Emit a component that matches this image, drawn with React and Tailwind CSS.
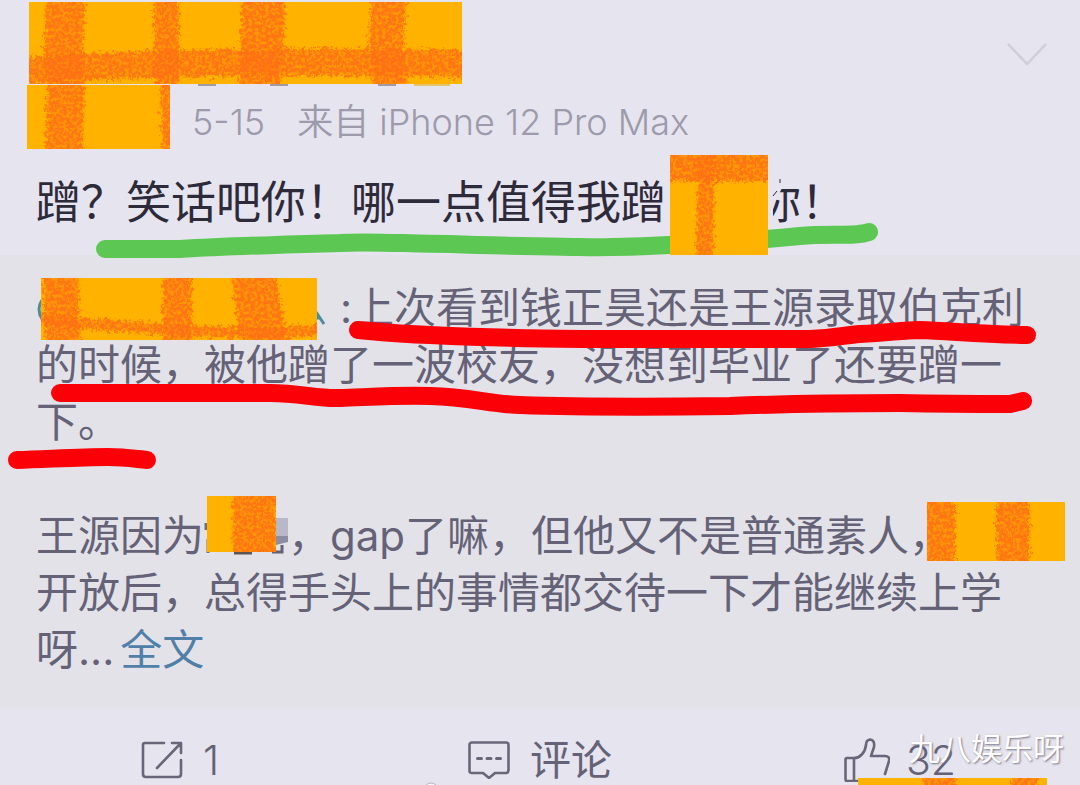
import React from "react";

const FONT = "font-[Inter,'Noto_Sans_CJK_SC',sans-serif]";

function Patch({ x, y, w, h, strokes }) {
  return (
    <svg x={x} y={y} width={w} height={h} viewBox={`0 0 ${w} ${h}`}>
      <rect width={w} height={h} fill="#ffb300" />
      {strokes.map(([d, width], i) => (
        <g key={i} fill="none" stroke="#ff7012">
          <path d={d} strokeWidth={width - 4} opacity="0.4" filter="url(#edge)" />
          <path d={d} strokeWidth={width} filter="url(#grain)" opacity="0.85" />
        </g>
      ))}
    </svg>
  );
}

function Markup() {
  return (
    <svg
      className="pointer-events-none absolute left-0 top-0"
      width="1080"
      height="785"
      viewBox="0 0 1080 785"
      aria-hidden="true"
    >
      <defs>
        <filter id="edge" filterUnits="userSpaceOnUse" x="-20" y="-20" width="480" height="140">
          <feTurbulence type="fractalNoise" baseFrequency="0.4" numOctaves="2" seed="3" result="n" />
          <feDisplacementMap in="SourceGraphic" in2="n" scale="8" xChannelSelector="R" yChannelSelector="G" />
        </filter>
        <filter id="grain" filterUnits="userSpaceOnUse" x="-20" y="-20" width="480" height="140">
          <feTurbulence type="fractalNoise" baseFrequency="0.3" numOctaves="3" seed="7" result="n" />
          <feDisplacementMap in="SourceGraphic" in2="n" scale="12" xChannelSelector="R" yChannelSelector="G" result="s" />
          <feColorMatrix in="n" type="matrix" values="0 0 0 0 1  0 0 0 0 1  0 0 0 0 1  0 0 0 5 -1.8" result="m" />
          <feComposite in="s" in2="m" operator="in" />
        </filter>
      </defs>

      <path d="M766 175H782V188L773 206V222H766Z" fill="#e6e4ee" />
      <path d="M773 196l4 -5M780 179v4" stroke="#2d2a3a" strokeWidth="1" />

      <g fill="none" strokeWidth="18" strokeLinecap="round" strokeLinejoin="round">
        <path
          stroke="#5cc853"
          d="M105 249H180C230 246 270 245 340 243C370 241 410 244 450 244C500 246 540 246 580 247C620 248 650 246 690 244C730 242 760 240 800 236C830 233 855 237 869 232"
        />
        <path
          stroke="#fb0007"
          d="M358 330C380 332 400 334 430 335C520 339 570 339 640 339H810C835 338 845 335 860 334C890 333 900 330 920 330C950 331 980 334 1027 335"
        />
        <path
          stroke="#fb0007"
          d="M60 393H270C300 393 318 399 340 398C370 397 400 395 430 396C470 397 490 404 520 405C580 407 650 407 730 406C780 404 850 403 900 403C950 404 990 404 1010 404L1023 401"
        />
        <path stroke="#fb0007" d="M17 460C50 459 80 457 108 457C125 457 136 459 147 460" />
      </g>

      <path d="M198 85h18M270 85h18M378 85h18" stroke="#a09aa4" strokeWidth="2" />
      <path d="M414 85h36" stroke="#e5c46e" strokeWidth="2" />
      <Patch
        x={29} y={2} w={433} h={82}
        strokes={[
          ["M37 -6Q33 40 36 90", 40],
          ["M137 -6L138 90", 26],
          ["M235 -6L231 90", 44],
          ["M360 -6L357 40L362 90", 36],
          ["M-6 69Q60 64 130 62T300 60T440 63", 28],
        ]}
      />
      <Patch x={27} y={85} w={143} h={64} strokes={[["M39 -6L37 70", 38], ["M141 -6L143 70", 16]]} />
      <Patch x={670} y={155} w={98} h={100} strokes={[["M-6 12H104", 30], ["M36 -6L35 106", 18]]} />

      <path d="M42 300Q36 309 42 319" fill="none" stroke="#4a8ca0" strokeWidth="3" />
      <path d="M316 312l8 12M316 318h5" fill="none" stroke="#4a8ca0" strokeWidth="3" />
      <Patch
        x={41} y={278} w={276} h={62}
        strokes={[
          ["M20 -6L22 68", 36],
          ["M136 -6L137 68", 30],
          ["M213 -6Q216 30 225 68", 46],
          ["M-6 41Q80 49 160 53T282 51", 12],
        ]}
      />

      <path d="M206 523v7M208 539v14" stroke="#716e84" strokeWidth="3" />
      <path d="M276 518h12v18h-12z" fill="#b9b8c8" />
      <path d="M276 536h12v6l-12 3z" fill="#8e8ca1" />
      <path d="M272 552h10V545" fill="none" stroke="#656178" strokeWidth="3" />
      <path d="M234 553h18" stroke="#5f5351" strokeWidth="3" />
      <Patch x={207} y={496} w={69} h={56} strokes={[["M48 -6L47 62", 44]]} />
      <Patch x={927} y={502} w={138} h={59} strokes={[["M12 -6V66", 34], ["M86 -6V66", 34]]} />
      <Patch x={858} y={778} w={189} h={7} strokes={[["M82 -8V16", 34], ["M166 -8V16", 28]]} />
      <circle cx="431" cy="790" r="7" fill="#f7f6fa" stroke="#b5b3bb" />
    </svg>
  );
}

function ShareIcon() {
  return (
    <svg width="42" height="38" viewBox="0 0 42 38" fill="none" stroke="#696679" strokeWidth="2.6" strokeLinecap="round" strokeLinejoin="round" aria-hidden="true">
      <path d="M23 2H4Q2 2 2 4V33Q2 36 5 36H37Q40 36 40 33V19M31 2H40V12M39 3L16 27" />
    </svg>
  );
}

function CommentIcon() {
  return (
    <svg width="42" height="38" viewBox="0 0 42 38" fill="none" stroke="#696679" strokeWidth="2.6" strokeLinecap="round" strokeLinejoin="round" aria-hidden="true">
      <path d="M4 1.500H38Q40.500 1.500 40.500 4V29Q40.500 32 38 32H27L21 37L15 32H4Q1.500 32 1.500 30V4Q1.500 1.500 4 1.500Z" />
      <path d="M9.500 17.500h4M19 17.500h4M28.500 17.500h4" strokeWidth="3" />
    </svg>
  );
}

function LikeIcon() {
  return (
    <svg width="46" height="44" viewBox="0 0 46 44" fill="none" stroke="#696679" strokeWidth="2.6" strokeLinecap="round" strokeLinejoin="round" aria-hidden="true">
      <path d="M3 20H10V43H3Q1.500 43 1.500 41V22Q1.500 20 3 20ZM10 20C16 20 21 15 22 7Q22 2 26 1.500Q31 2 30 9L27 18H41Q46 18 45 23L41 36M10 43H35" />
    </svg>
  );
}

export default function App() {
  return (
    <main className={`relative min-h-screen overflow-hidden bg-[#e6e4ee] text-[#656278] ${FONT}`}>
      <article>
        <header className="flex h-[102px] items-start justify-end pr-8 pt-[42px]">
          <button type="button" aria-label="更多" className="block">
            <svg width="42" height="26" viewBox="0 0 42 26" fill="none" stroke="#cfcdd6" strokeWidth="2.5" aria-hidden="true">
              <path d="M2 2L21 22L40 2" />
            </svg>
          </button>
        </header>
        <div className="flex gap-8 whitespace-nowrap pl-48 text-[36px] font-[350] leading-10 text-[#9c9aab]">
          <time>5-15</time>
          <span>来自 iPhone 12 Pro Max</span>
        </div>
        <p className="mt-8 whitespace-nowrap pb-6 pl-9 text-[45px] leading-[57px] text-[#2d2a3a]">
          蹭？笑话吧你！哪一点值得我蹭
          <span className="inline-block w-[90px]" />
          你！
        </p>
        <section className="whitespace-nowrap bg-[#e3e2e9] pb-[30px] pl-9 pt-6 text-[42px] leading-[57px]">
          <p>
            <span className="inline-block w-[304px]" />:上次看到钱正昊还是王源录取伯克利
            <br />
            的时候，被他蹭了一波校友，没想到毕业了还要蹭一
            <br />
            下。
          </p>
          <p className="mt-[57px]">
            王源因为
            <span className="inline-block w-[84px]" />
            ，gap了嘛，但他又不是普通素人，
            <br />
            开放后，总得手头上的事情都交待一下才能继续上学
            <br />
            呀...
            <a href="#full" className="ml-1.5 text-[#507fa8]">
              全文
            </a>
          </p>
        </section>
      </article>
      <footer className="grid grid-cols-3 pt-7 text-[41px] font-[350] leading-[48px]">
        <button type="button" aria-label="转发 1" className="flex items-center justify-center gap-5">
          <ShareIcon />
          <span>1</span>
        </button>
        <button type="button" className="flex items-center justify-center gap-5">
          <CommentIcon />
          <span className="font-normal">评论</span>
        </button>
        <button type="button" aria-label="赞 32" className="flex items-center justify-center gap-4">
          <LikeIcon />
          <span>32</span>
        </button>
      </footer>
      <Markup />
      <span className="absolute bottom-4 right-4 text-[31px] leading-10 text-white [text-shadow:1px_1px_2px_#77758a]">
        九八娱乐呀
      </span>
    </main>
  );
}
